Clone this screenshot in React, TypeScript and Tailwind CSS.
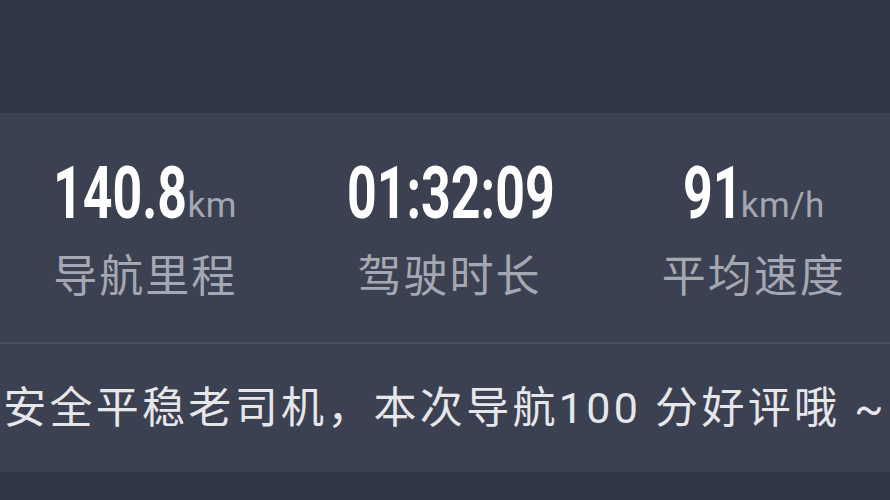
const stats = [
  { value: "140.8", unit: "km", label: "导航里程", box: "w-[128px]" },
  { value: "01:32:09", unit: "", label: "驾驶时长", box: "w-[205px]" },
  { value: "91", unit: "km/h", label: "平均速度", box: "w-[52px]" },
];

export default function App() {
  return (
    <div className="flex h-[500px] w-[890px] flex-col overflow-hidden bg-[#323747] font-['Roboto','Noto_Sans_CJK_SC',sans-serif]">
      <div className="h-[113px] shrink-0" />

      {/* trip summary */}
      <div className="h-[229px] shrink-0 overflow-hidden bg-[#3c4151]">
        <div className="-ml-[7px] grid w-[913px] grid-cols-3 pt-[42px]">
          {stats.map((s) => (
            <div key={s.label} className="flex flex-col items-center">
              <div className="flex items-end">
                <span className={`${s.box} inline-block overflow-visible whitespace-nowrap`}>
                  <span className="inline-block origin-left scale-x-[0.71] text-[73px] leading-[76px] font-bold text-white">
                    {s.value}
                  </span>
                </span>
                {s.unit ? (
                  <span className="mb-[8px] ml-[6px] text-[35px] leading-none tracking-[0.5px] text-[#a3a7b2]">
                    {s.unit}
                  </span>
                ) : null}
              </div>
              <div className="mt-[20px] text-[44px] leading-[52px] tracking-[2px] text-[#a4a8b3]">
                {s.label}
              </div>
            </div>
          ))}
        </div>
      </div>

      <div className="h-[2px] shrink-0 bg-[#4a4f5e]" />

      {/* rating line */}
      <div className="flex h-[128px] shrink-0 items-center justify-center bg-[#3c4151]">
        <p className="whitespace-nowrap text-[43px] tracking-[3.3px] text-[#e6e7eb]">
          安全平稳老司机，本次导航100 分好评哦 ~
        </p>
      </div>

      <div className="flex-1" />
    </div>
  );
}
